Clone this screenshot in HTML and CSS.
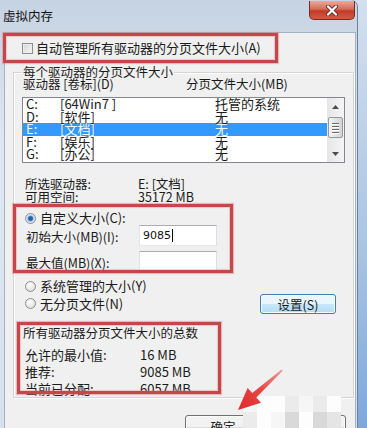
FILE: index.html
```html
<!DOCTYPE html>
<html lang="zh-CN">

<head>
    <meta charset="utf-8">
    <title>虚拟内存</title>
    <link rel="stylesheet" href="styles.css">
</head>

<body>
    <div class="window">
        <div class="titlebar">
            <span class="title">虚拟内存</span>
            <div class="close">
                <svg width="14" height="11" viewBox="0 0 14 11">
                    <path d="M3 1.5 L11 9.5 M11 1.5 L3 9.5" stroke="#7a2c22" stroke-width="4" stroke-linecap="round"/>
                    <path d="M3 1.5 L11 9.5 M11 1.5 L3 9.5" stroke="#fff" stroke-width="2.2" stroke-linecap="round"/>
                </svg>
            </div>
        </div>

        <div class="panel">
            <div class="auto"><span class="checkbox"></span>自动管理所有驱动器的分页文件大小(A)</div>

            <div class="group">
                <div class="legend">每个驱动器的分页文件大小</div>
                <div class="cols">
                    <span class="col-drive">驱动器 [卷标](D)</span>
                    <span>分页文件大小(MB)</span>
                </div>

                <div class="listbox">
                    <div class="rows">
                        <div class="row"><span class="letter">C:</span><span class="label">[64Win7 ]</span><span>托管的系统</span></div>
                        <div class="row"><span class="letter">D:</span><span class="label">[软件]</span><span>无</span></div>
                        <div class="row selected"><span class="letter">E:</span><span class="label">[文档]</span><span>无</span></div>
                        <div class="row"><span class="letter">F:</span><span class="label">[娱乐]</span><span>无</span></div>
                        <div class="row"><span class="letter">G:</span><span class="label">[办公]</span><span>无</span></div>
                    </div>
                    <div class="scrollbar">
                        <div class="sb-arrow">
                            <svg width="7" height="4" viewBox="0 0 7 4"><path d="M0 4 L3.5 0 L7 4 Z" fill="#4d4d4d"/></svg>
                        </div>
                        <div class="sb-thumb">
                            <span class="grip"></span>
                            <span class="grip"></span>
                            <span class="grip"></span>
                            <span class="grip"></span>
                        </div>
                        <div class="sb-track"></div>
                        <div class="sb-arrow">
                            <svg width="7" height="4" viewBox="0 0 7 4"><path d="M0 0 L3.5 4 L7 0 Z" fill="#4d4d4d"/></svg>
                        </div>
                    </div>
                </div>

                <div class="info">
                    <div class="info-row"><span class="info-label">所选驱动器:</span><span>E: [文档]</span></div>
                    <div class="info-row"><span class="info-label">可用空间:</span><span>35172 MB</span></div>
                </div>

                <div class="option opt-custom"><span class="radio on"></span>自定义大小(C):</div>
                <div class="field">
                    <span class="field-label">初始大小(MB)(I):</span>
                    <div class="input">9085<span class="caret"></span></div>
                </div>
                <div class="field field-max">
                    <span class="field-label">最大值(MB)(X):</span>
                    <div class="input"></div>
                </div>

                <div class="option opt-system"><span class="radio"></span>系统管理的大小(Y)</div>
                <div class="opt-row">
                    <div class="option"><span class="radio"></span>无分页文件(N)</div>
                    <button class="btn btn-hot" type="button">设置(S)</button>
                </div>

                <div class="totals-legend">所有驱动器分页文件大小的总数</div>
                <div class="totals">
                    <div class="totals-row"><span class="totals-label">允许的最小值:</span><span>16 MB</span></div>
                    <div class="totals-row"><span class="totals-label">推荐:</span><span>9085 MB</span></div>
                    <div class="totals-row"><span class="totals-label">当前已分配:</span><span>6057 MB</span></div>
                </div>
            </div>

            <div class="actions">
                <button class="btn" type="button">确定</button>
                <button class="btn" type="button">取消</button>
            </div>
        </div>
    </div>

    <!-- annotations drawn over the dialog -->
    <div class="mark mark-auto"></div>
    <div class="mark mark-custom"></div>
    <div class="mark mark-totals"></div>

    <div class="mosaic">
        <span class="m-a"></span><span class="m-b"></span><span class="m-b"></span><span class="m-c"></span><span class="m-a"></span><span class="m-c"></span><span class="m-b"></span>
        <span class="m-c"></span><span class="m-b"></span><span class="m-a"></span><span class="m-d"></span><span class="m-b"></span><span class="m-d"></span><span class="m-e"></span>
    </div>

    <svg class="arrow" width="367" height="428" viewBox="0 0 367 428">
        <defs>
            <linearGradient id="arrowFill" x1="238" y1="410" x2="283" y2="369" gradientUnits="userSpaceOnUse">
                <stop offset="0" stop-color="#e22a2a"/>
                <stop offset="0.5" stop-color="#e64545"/>
                <stop offset="1" stop-color="#efa0a0"/>
            </linearGradient>
        </defs>
        <polygon points="238,410 247.6,387.9 252.3,393.1 281.5,369.5 282.8,370.8 256.3,397.5 261,402.7" fill="url(#arrowFill)"/>
    </svg>
</body>

</html>
```

FILE: styles.css
```css
body {
    margin: 0;
    width: 367px;
    height: 428px;
    overflow: hidden;
    position: relative;
    background: linear-gradient(#d3e0ee, #a9c3e0 60%, #7ea8da);
    font-family: "Noto Sans CJK SC", sans-serif;
    font-size: 12.5px;
    color: #1b1b1b;
}

.window {
    width: 358px;
    height: 428px;
    box-sizing: border-box;
    border-right: 1px solid #6f8199;
    border-top-right-radius: 7px;
    background: linear-gradient(#c6d3e2, #dfe8f2 35%, #d5e1ed);
}

.titlebar {
    height: 32px;
    display: flex;
    justify-content: space-between;
    align-items: flex-start;
}

.title {
    padding-left: 3px;
    line-height: 32px;
    color: #111;
}

.close {
    width: 46px;
    height: 19px;
    margin: 1px 2px 0 0;
    box-sizing: border-box;
    border: 1px solid #7a2c22;
    border-top: none;
    border-radius: 0 0 5px 5px;
    background: linear-gradient(#eba99b, #d66c57 45%, #c13b2b 55%, #d45a41);
    display: flex;
    align-items: center;
    justify-content: center;
}

.panel {
    margin-left: 4px;
    width: 352px;
    height: 396px;
    box-sizing: border-box;
    border: 1px solid #a3b2c4;
    border-bottom: none;
    background: #f0f0f0;
}

.auto {
    display: flex;
    align-items: center;
    gap: 3px;
    margin-top: 8px;
    padding-left: 17px;
    height: 14px;
    line-height: 14px;
    font-size: 13px;
}

.checkbox {
    width: 11px;
    height: 11px;
    box-sizing: border-box;
    border: 1px solid #8f8f8f;
    background: linear-gradient(135deg, #d6d6d6, #f6f6f6);
    box-shadow: inset 0 0 0 1px #ececec;
}

.group {
    margin: 17px 0 0 8px;
    width: 341px;
    box-sizing: border-box;
    border: 1px solid #d5d5d5;
    box-shadow: inset 1px 1px 0 #fff, 1px 1px 0 #fff;
}

.legend {
    margin: -7px 0 0 8px;
    width: fit-content;
    padding: 0 1px;
    height: 12px;
    line-height: 12px;
    background: #f0f0f0;
}

.cols {
    display: flex;
    padding-left: 9px;
    line-height: 12px;
}

.col-drive {
    width: 163px;
}

.listbox {
    display: flex;
    margin: 7px 0 0 8px;
    width: 323px;
    height: 66px;
    box-sizing: border-box;
    border: 1px solid #828790;
    background: #fff;
}

.rows {
    flex: 1;
}

.row {
    display: flex;
    height: 12.5px;
    line-height: 12.5px;
    padding-left: 3px;
    font-size: 13px;
}

.row.selected {
    background: #3399ff;
    color: #f4f8ff;
}

.letter {
    width: 34px;
}

.label {
    width: 155px;
}

.scrollbar {
    width: 17px;
    display: flex;
    flex-direction: column;
    align-items: center;
    background: linear-gradient(90deg, #e6e6e6, #f5f5f5);
}

.sb-arrow {
    height: 17px;
    display: flex;
    align-items: center;
    justify-content: center;
}

.sb-thumb {
    margin-top: 2px;
    width: 15px;
    height: 21px;
    box-sizing: border-box;
    border: 1px solid #989898;
    border-radius: 2px;
    background: linear-gradient(90deg, #f4f4f4, #e3e3e3 50%, #d4d4d4);
    display: flex;
    flex-direction: column;
    align-items: center;
    justify-content: center;
    gap: 2px;
}

.grip {
    width: 7px;
    height: 1px;
    background: #6a6a6a;
    box-shadow: 0 1px 0 #fff;
}

.sb-track {
    flex: 1;
}

.info {
    margin-top: 14px;
    padding-left: 11px;
    line-height: 13px;
}

.info-row,
.totals-row {
    display: flex;
}

.info-label {
    width: 113px;
}

.option {
    display: flex;
    align-items: center;
    gap: 4px;
    height: 14px;
    line-height: 14px;
    padding-left: 11px;
    font-size: 13px;
}

.opt-custom {
    margin-top: 8px;
}

.opt-system {
    margin-top: 7px;
}

.radio {
    width: 11px;
    height: 11px;
    box-sizing: border-box;
    border: 1px solid #8e8f8f;
    border-radius: 50%;
    background: radial-gradient(circle at 40% 35%, #fff, #d4d4d4);
}

.radio.on {
    background: radial-gradient(circle, #1d4c86 0, #3d7bc4 2.2px, #cfe0f1 3.4px, #eaeaea 5px);
}

.field {
    display: flex;
    align-items: center;
    height: 21px;
    padding-left: 12px;
}

.field-label {
    width: 113px;
    padding-top: 2px;
}

.field-max {
    margin-top: 5px;
}

.input {
    width: 78px;
    height: 21px;
    box-sizing: border-box;
    border: 1px solid #abadb3;
    border-color: #abadb3 #dbdfe6 #e3e9ef #e2e3ea;
    background: #fff;
    padding-left: 3px;
    display: flex;
    align-items: center;
    font-family: "DejaVu Sans", sans-serif;
    font-size: 11px;
    color: #111;
}

.caret {
    width: 1px;
    height: 13px;
    margin-left: 1px;
    background: #000;
}

.opt-row {
    display: flex;
    align-items: center;
    height: 21px;
}

.opt-row .btn {
    margin: 0 17px 0 auto;
}

.btn {
    width: 76px;
    height: 20px;
    box-sizing: border-box;
    border: 1px solid #707070;
    border-radius: 3px;
    background: linear-gradient(#f2f2f2 0 50%, #dddddd 50%, #cfcfcf);
    box-shadow: inset 0 0 0 1px #fbfbfb;
    font-family: inherit;
    font-size: 12.5px;
    color: #1b1b1b;
    padding: 0;
}

.btn-hot {
    border-color: #3c7fb1;
    background: linear-gradient(#eaf6fd 0 50%, #c9e8fa 50%, #b3dcf4);
}

.totals-legend {
    margin-top: 12px;
    padding-left: 9px;
    line-height: 13px;
}

.totals {
    margin-top: 7px;
    padding-left: 11px;
    line-height: 17px;
    font-size: 13px;
}

.totals-label {
    width: 115px;
}

.actions {
    display: flex;
    gap: 9px;
    margin-top: 17px;
    padding-left: 180px;
}

.actions .btn {
    height: 23px;
}

.mark {
    position: absolute;
    box-sizing: border-box;
    border: 3px solid #c5464b;
    box-shadow: 0 0 1px 1px rgba(214, 120, 124, 0.45), inset 0 0 1px 1px rgba(214, 120, 124, 0.35);
}

.mark-auto {
    left: 3px;
    top: 33px;
    width: 275px;
    height: 30px;
}

.mark-custom {
    left: 13px;
    top: 204px;
    width: 220px;
    height: 69px;
}

.mark-totals {
    left: 17px;
    top: 322px;
    width: 204px;
    height: 72px;
}

.mosaic {
    position: absolute;
    left: 243px;
    top: 396px;
    display: grid;
    grid-template-columns: repeat(7, 14px);
    grid-template-rows: repeat(2, 16px);
}

.m-a {
    background: #f6f6f6;
}

.m-b {
    background: #fdfdfd;
}

.m-c {
    background: #ebebeb;
}

.m-d {
    background: #d9d9d9;
}

.m-e {
    background: #e5e5e5;
}

.arrow {
    position: absolute;
    left: 0;
    top: 0;
    pointer-events: none;
}
```
